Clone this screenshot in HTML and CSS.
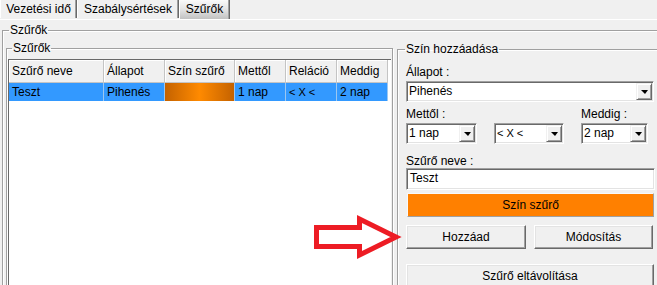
FILE: index.html
```html
<!DOCTYPE html>
<html lang="hu">
<head>
  <meta charset="UTF-8" />
  <title>Szűrők</title>
  <link rel="stylesheet" href="styles.css">
</head>
<body>
  <!-- Tab strip -->
  <div class="tabs">
    <div class="tab tab-drive">Vezetési idő</div>
    <div class="tab tab-rules">Szabálysértések</div>
    <div class="tab tab-active">Szűrők</div>
  </div>

  <div class="page">
    <fieldset class="group outer">
      <legend>Szűrők</legend>
      <div class="outer-row">

        <!-- Filter list -->
        <fieldset class="group list-group">
          <legend>Szűrők</legend>
          <div class="listview">
            <table>
              <thead>
                <tr>
                  <th class="c-name">Szűrő neve</th>
                  <th class="c-state">Állapot</th>
                  <th class="c-color">Szín szűrő</th>
                  <th class="c-num">Mettől</th>
                  <th class="c-num">Reláció</th>
                  <th class="c-num">Meddig</th>
                </tr>
              </thead>
              <tbody>
                <tr class="selected">
                  <td>Teszt</td>
                  <td>Pihenés</td>
                  <td class="swatch"></td>
                  <td>1 nap</td>
                  <td class="rel">&lt; X &lt;</td>
                  <td>2 nap</td>
                </tr>
              </tbody>
            </table>
          </div>
        </fieldset>

        <!-- Add colour form -->
        <fieldset class="group add-group">
          <legend>Szín hozzáadása</legend>
          <div class="field-label first">Állapot :</div>
          <div class="combo"><span class="combo-text">Pihenés</span><span class="drop"><i></i></span></div>

          <div class="range">
            <div class="field-label">Mettől :</div>
            <div></div>
            <div class="field-label">Meddig :</div>
            <div class="combo"><span class="combo-text">1 nap</span><span class="drop"><i></i></span></div>
            <div class="combo"><span class="combo-text rel">&lt; X &lt;</span><span class="drop"><i></i></span></div>
            <div class="combo"><span class="combo-text">2 nap</span><span class="drop"><i></i></span></div>
          </div>

          <div class="field-label name-label">Szűrő neve :</div>
          <div class="textbox">Teszt</div>
          <button class="btn color-btn" type="button">Szín szűrő</button>

          <div class="btn-row">
            <button class="btn" type="button">Hozzáad</button>
            <button class="btn" type="button">Módosítás</button>
          </div>
          <button class="btn remove-btn" type="button">Szűrő eltávolítása</button>
        </fieldset>

      </div>
    </fieldset>
  </div>

  <!-- Annotation arrow -->
  <svg class="arrow" width="100" height="55" viewBox="0 0 100 55">
    <polygon points="6.5,17.5 49.5,17.5 49.5,9 86,27 49.5,45 49.5,36.5 6.5,36.5"
             fill="none" stroke="#ed1c24" stroke-width="5" stroke-linejoin="miter" />
  </svg>
</body>
</html>
```

FILE: styles.css
```css
body {
  margin: 0;
  width: 657px;
  height: 285px;
  overflow: hidden;
  position: relative;
  background: #f0f0f0;
  font-family: "Liberation Sans", Arial, sans-serif;
  font-size: 12px;
  color: #000;
}

/* tabs */
.tabs {
  display: flex;
  height: 19px;
}
.tab {
  box-sizing: border-box;
  height: 18px;
  line-height: 18px;
  text-align: center;
  border-left: 1px solid #fff;
  border-right: 1px solid #696969;
  box-shadow: inset -1px 0 #a0a0a0;
}
.tab-drive {
  width: 77px;
}
.tab-rules {
  width: 102px;
}
.tab-active {
  width: 51px;
  height: 19px;
  background: linear-gradient(#fafafa, #e6e6e6 45%, #c2c2c2);
}

.page {
  width: 700px;
  border-top: 1px solid #fff;
  padding: 3px 0 0 2px;
}

/* group boxes */
.group {
  margin: 0;
  border: 1px solid #a0a0a0;
  box-shadow: inset 1px 1px #fff, 1px 1px #fff;
  min-width: 0;
}
.group legend {
  padding: 0 1px;
  line-height: 14px;
}
.outer {
  padding: 4px 0 0 3px;
}
.outer legend {
  margin-left: 3px;
}
.outer-row {
  display: flex;
  gap: 4px;
  align-items: flex-start;
}
.list-group {
  padding: 4px 1px 0 1px;
}
.list-group legend {
  margin-left: 4px;
}
.add-group {
  margin-top: 1px;
  width: 248px;
  padding: 9px 8px 0 8px;
}
.add-group legend {
  margin-left: -1px;
}

/* list view */
.listview {
  width: 382px;
  height: 240px;
  background: #fff;
  border-top: 1px solid #696969;
  border-left: 1px solid #696969;
}
.listview table {
  border-collapse: separate;
  border-spacing: 0;
  table-layout: fixed;
  width: 376px;
}
.listview th {
  height: 22px;
  padding: 0 3px;
  text-align: left;
  font-weight: normal;
  background: #f0f0f0;
  border-right: 1px solid #c4c4c4;
  border-bottom: 1px solid #c4c4c4;
  box-shadow: inset 1px 1px #fff;
  white-space: nowrap;
  overflow: hidden;
}
.c-name {
  width: 88px;
}
.c-state {
  width: 54px;
}
.c-color {
  width: 63px;
}
.c-num {
  width: 44px;
}
.listview td {
  height: 18px;
  padding: 0 3px;
  background: #3399ff;
  border-right: 1px solid #9cc7f0;
  white-space: nowrap;
}
.listview td.swatch {
  background: linear-gradient(to right, #c46200, #ff8a00 50%, #c46200);
}
.rel {
  font-size: 11px;
}

/* form fields */
.field-label {
  line-height: 14px;
  height: 14px;
  margin-bottom: 2px;
}
.combo {
  box-sizing: border-box;
  display: flex;
  align-items: center;
  height: 21px;
  background: #fff;
  border: 1px solid;
  border-color: #a0a0a0 #fff #fff #a0a0a0;
  box-shadow: inset 1px 1px #696969, inset -1px -1px #e3e3e3;
  padding: 1px 1px 1px 2px;
}
.combo-text {
  flex: 1;
  line-height: 17px;
}
.drop {
  box-sizing: border-box;
  width: 16px;
  height: 17px;
  display: flex;
  align-items: center;
  justify-content: center;
  background: #f0f0f0;
  border: 1px solid;
  border-color: #f0f0f0 #696969 #696969 #f0f0f0;
  box-shadow: inset 1px 1px #fff, inset -1px -1px #a0a0a0;
}
.drop i {
  width: 0;
  height: 0;
  margin-top: 1px;
  border-left: 4px solid transparent;
  border-right: 3px solid transparent;
  border-top: 4px solid #000;
}
.range {
  display: grid;
  grid-template-columns: 71px 70px 67px;
  column-gap: 17px;
  margin-top: 5px;
}
.name-label {
  margin-top: 10px;
  margin-bottom: 0;
}
.textbox {
  box-sizing: border-box;
  width: 249px;
  height: 22px;
  line-height: 18px;
  padding: 0 3px;
  background: #fff;
  border: 1px solid;
  border-color: #a0a0a0 #fff #fff #a0a0a0;
  box-shadow: inset 1px 1px #696969, inset -1px -1px #e3e3e3;
}

/* buttons */
.btn {
  display: block;
  box-sizing: border-box;
  width: 100%;
  height: 24px;
  padding: 0;
  font: inherit;
  color: #000;
  background: #f0f0f0;
  border: 1px solid;
  border-color: #fff #696969 #696969 #fff;
  box-shadow: inset -1px -1px #a0a0a0, inset 1px 1px #e3e3e3;
}
.color-btn {
  margin: 3px 0 0 1px;
  width: 247px;
  background: #ff8000;
  border-color: #f8f8f8 #a0a0a0 #a0a0a0 #f8f8f8;
  box-shadow: none;
}
.btn-row {
  display: grid;
  grid-template-columns: 120px 119px;
  column-gap: 8px;
  margin-top: 8px;
}
.remove-btn {
  margin-top: 15px;
}

/* annotation */
.arrow {
  position: absolute;
  left: 310px;
  top: 210px;
}
```
